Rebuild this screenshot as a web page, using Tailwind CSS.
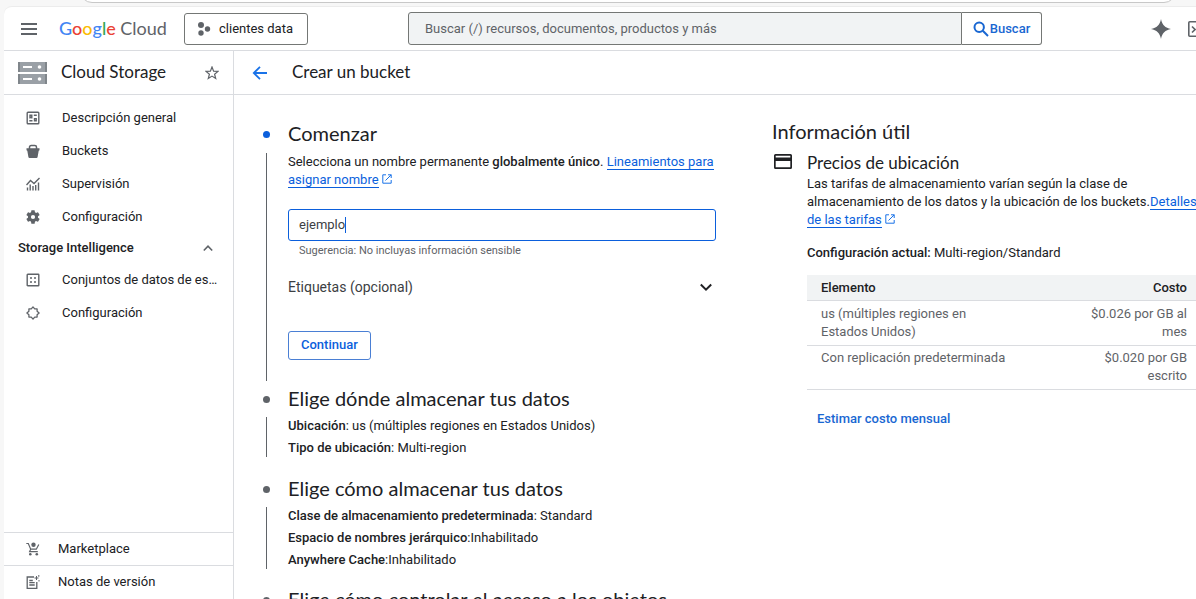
<!DOCTYPE html>
<html lang="es">
  <head>
    <meta charset="UTF-8" />
    <meta name="viewport" content="width=device-width, initial-scale=1.0" />
    <title>Crear un bucket – Cloud Storage – Google Cloud</title>
    <script src="https://cdn.jsdelivr.net/npm/@tailwindcss/browser@4"></script>
  </head>
  <body
    class="h-screen overflow-hidden bg-[#f7f7f7] font-['Roboto','Liberation_Sans',sans-serif] text-[13px] leading-[18px] text-[#202124] flex flex-col"
  >
    <!-- Lower edge of the address bar -->
    <div class="h-[6px] shrink-0 pl-[80px] pr-[20px] overflow-hidden">
      <div class="-mt-[21px] h-6 rounded-b-xl border border-[#c8c8c8] bg-white"></div>
    </div>

    <div
      class="ml-1 flex-1 min-h-0 flex flex-col bg-white rounded-tl-lg border-t border-[#ececec] overflow-hidden"
    >
      <!-- Top bar -->
      <header class="h-11 shrink-0 flex items-center border-b border-[#dadce0]">
        <button class="ml-4 w-[18px]" aria-label="Menú de navegación">
          <svg class="w-[18px] h-[18px]" viewBox="0 0 18 18" fill="#5f6368">
            <path d="M1 3h16v2H1zM1 8h16v2H1zM1 13h16v2H1z" />
          </svg>
        </button>
        <a
          href="#"
          class="ml-[21px] w-[105px] whitespace-nowrap font-['Lato',sans-serif] text-[18px] leading-[22px] pb-[2px] text-[#5f6368]"
          ><span class="font-medium"
            ><span class="text-[#4285f4]">G</span
            ><span class="text-[#ea4335]">o</span
            ><span class="text-[#fbbc04]">o</span
            ><span class="text-[#4285f4]">g</span
            ><span class="text-[#34a853]">l</span
            ><span class="text-[#ea4335]">e</span></span
          >
          Cloud</a
        >
        <button
          class="ml-5 h-8 w-[124px] box-border border border-[#747775] rounded-[3px] flex items-center pl-3 gap-2 whitespace-nowrap"
        >
          <svg class="w-[14px] h-[14px]" viewBox="0 0 14 14" fill="#5f6368">
            <circle cx="4" cy="3" r="3" />
            <circle cx="4" cy="11" r="2.7" />
            <circle cx="10.5" cy="7" r="2.7" />
          </svg>
          clientes data
        </button>
        <form class="ml-[100px] w-[634px] h-[33px] flex shrink-0" role="search">
          <input
            type="text"
            aria-label="Buscar"
            placeholder="Buscar (/) recursos, documentos, productos y más"
            class="flex-1 min-w-0 px-4 bg-[#f1f3f4] border border-[#747775] rounded-l-[3px] placeholder:text-[#5f6368]"
          />
          <button
            type="button"
            class="w-20 border border-l-0 border-[#747775] rounded-r-[3px] flex items-center justify-center gap-px text-[#1967d2] font-medium"
          >
            <svg class="w-4 h-4" viewBox="0 0 16 16" fill="none" stroke="#1967d2" stroke-width="2">
              <circle cx="6.2" cy="6.2" r="4.7" />
              <path d="M9.8 9.8l5.2 5.2" />
            </svg>
            Buscar
          </button>
        </form>
        <button class="ml-auto w-5" aria-label="Gemini">
          <svg class="w-5 h-5" viewBox="0 0 20 20" fill="#5f6368">
            <path d="M10 0c.9 5.600 4.400 9.100 10 10-5.600.9-9.100 4.400-10 10-.9-5.600-4.400-9.100-10-10 5.600-.9 9.100-4.400 10-10z" />
          </svg>
        </button>
        <button class="ml-[17px] w-2 h-[18px] overflow-hidden" aria-label="Cloud Shell">
          <svg class="w-[18px] h-[18px] max-w-none" viewBox="0 0 18 18" fill="none" stroke="#5f6368" stroke-width="1.6">
            <rect x=".8" y="1.8" width="16" height="14.500" rx="1" />
            <path d="M4 6.500l3 3-3 3" />
          </svg>
        </button>
      </header>

      <div class="flex-1 min-h-0 flex">
        <!-- Sidebar -->
        <aside class="w-[230px] shrink-0 border-r border-[#dadce0] flex flex-col">
          <div class="h-11 shrink-0 flex items-center pl-[14px] pr-[14px] border-b border-[#dadce0]">
            <svg class="w-[29px] h-[22px]" viewBox="0 0 29 22">
              <path fill="#9aa0a6" d="M0 0h29v10H0zM0 12h29v10H0z" />
              <path fill="#80868b" d="M0 0h2v10H0zM27 0h2v10h-2zM0 12h2v10H0zM27 12h2v10h-2z" />
              <path fill="#fff" d="M5 4h9v2H5zM5 16h9v2H5z" />
              <circle cx="21.500" cy="5" r="1.800" fill="#fff" />
              <circle cx="21.500" cy="17" r="1.800" fill="#fff" />
            </svg>
            <h2 class="ml-[14px] flex-1 text-[17px] leading-[22px] pb-[2px] font-['Lato',sans-serif]">Cloud Storage</h2>
            <button aria-label="Fijar">
              <svg class="w-[14px] h-[14px]" viewBox="0 0 14 14" fill="none" stroke="#5f6368" stroke-width="1.200">
                <path d="M7 1l1.600 4.100 4.400.3-3.400 2.800 1.100 4.300L7 10.100l-3.700 2.400 1.100-4.300L1 5.400l4.400-.3z" />
              </svg>
            </button>
          </div>

          <nav class="pt-[7px] flex-1">
            <ul class="flex flex-col gap-px">
              <li>
                <a href="#" class="h-8 flex items-center gap-[22px] pl-[22px]">
                  <svg class="w-[14px] h-[14px]" viewBox="0 0 14 14" fill="none" stroke="#5f6368" stroke-width="1.400">
                    <rect x="1.200" y="1.200" width="11.600" height="11.600" rx=".8" />
                    <path d="M3.300 4.200h3.200M3.300 6.200h3.200M3.300 9.800h3.200M4 3.500v4M5.800 3.500v4M7.800 4.200h3M7.800 7.600h3M7.800 9.800h3M8.500 7v3.500M10.200 7v3.500" />
                  </svg>
                  Descripción general
                </a>
              </li>
              <li>
                <a href="#" class="h-8 flex items-center gap-[22px] pl-[22px]">
                  <svg class="w-[14px] h-[14px]" viewBox="0 0 14 14">
                    <path fill="none" stroke="#5f6368" stroke-width="1.500" d="M3.500 5V3.200q0-1.700 1.700-1.700h3.600q1.700 0 1.700 1.700V5" />
                    <path fill="#5f6368" d="M.5 4.300h13v2l-.8.500-1.100 6.200q-.2.900-1.100.9h-7q-.9 0-1.100-.9L1.300 6.800l-.8-.5z" />
                  </svg>
                  Buckets
                </a>
              </li>
              <li>
                <a href="#" class="h-8 flex items-center gap-[22px] pl-[22px]">
                  <svg class="w-[14px] h-[14px]" viewBox="0 0 14 14" fill="none" stroke="#5f6368" stroke-width="1.400">
                    <path d="M.5 8l4-4.500L8 6.500l5.500-5.500" />
                    <path d="M1.500 13.500v-3M4.200 13.500V7.500M7 13.500V9M9.700 13.500V8M12.500 13.500V5.500" />
                  </svg>
                  Supervisión
                </a>
              </li>
              <li>
                <a href="#" class="h-8 flex items-center gap-[22px] pl-[22px]">
                  <svg class="w-[14px] h-[14px]" viewBox="2 2 20 20" fill="#5f6368">
                    <path d="M19.140 12.940c.04-.3.060-.61.060-.94s-.02-.64-.07-.94l2.030-1.580a.49.49 0 0 0 .12-.61l-1.920-3.320a.49.49 0 0 0-.59-.22l-2.390.96a7 7 0 0 0-1.620-.94l-.36-2.540a.48.48 0 0 0-.48-.41h-3.840a.48.48 0 0 0-.47.41l-.36 2.540c-.59.24-1.130.57-1.620.94l-2.390-.96a.48.48 0 0 0-.59.22L2.740 8.870a.48.48 0 0 0 .12.610l2.030 1.580c-.05.3-.09.63-.09.940s.02.640.07.940l-2.030 1.580a.49.49 0 0 0-.12.610l1.920 3.320c.12.220.37.290.59.220l2.390-.96c.5.380 1.030.7 1.620.94l.36 2.540c.05.240.24.410.48.410h3.840c.24 0 .44-.17.470-.41l.36-2.540a7 7 0 0 0 1.620-.94l2.390.96c.22.080.47 0 .59-.22l1.920-3.320a.48.48 0 0 0-.12-.61zM12 15a3 3 0 1 1 0-6 3 3 0 0 1 0 6z" />
                  </svg>
                  Configuración
                </a>
              </li>
            </ul>

            <button class="w-full h-[30px] flex items-center justify-between pl-[14px] pr-5 font-medium">
              Storage Intelligence
              <svg class="w-[10px] h-[10px]" viewBox="0 0 10 10" fill="none" stroke="#5f6368" stroke-width="1.600">
                <path d="M.8 7.500L5 3.200l4.200 4.300" />
              </svg>
            </button>

            <ul class="pt-px flex flex-col gap-px">
              <li>
                <a href="#" class="h-8 flex items-center gap-[22px] pl-[22px] pr-3">
                  <svg class="w-[14px] h-[14px] shrink-0" viewBox="0 0 14 14">
                    <rect x="1.200" y="1.200" width="11.600" height="11.600" rx=".6" fill="none" stroke="#5f6368" stroke-width="1.400" />
                    <path fill="#5f6368" d="M4 4.200h2v1.600H4zM8 4.200h2v1.600H8zM4 8.200h2v1.600H4zM8 8.200h2v1.600H8z" />
                  </svg>
                  <span class="truncate">Conjuntos de datos de estadísticas</span>
                </a>
              </li>
              <li>
                <a href="#" class="h-8 flex items-center gap-[22px] pl-[22px]">
                  <svg class="w-[14px] h-[14px]" viewBox="0 0 14 14" fill="none" stroke="#5f6368" stroke-width="1.300" stroke-linejoin="round">
                    <path d="M7 .9l1.700 2h2.400v2.400L13.100 7l-2 1.700v2.400H8.700l-1.700 2-1.700-2H2.900V8.700L.9 7l2-1.700V2.900h2.400z" />
                  </svg>
                  Configuración
                </a>
              </li>
            </ul>
          </nav>

          <a href="#" class="h-[33px] shrink-0 flex items-center gap-[18px] pl-[22px] border-t border-[#dadce0]">
            <svg class="w-[14px] h-[14px]" viewBox="0 0 14 14">
              <path fill="none" stroke="#5f6368" stroke-width="1.200" d="M.3 1.500h2l2.400 5.700h5.600l2.500-4.700M4.700 7.200L3.600 9.600h8.200" />
              <circle cx="7.500" cy="2.800" r="2.200" fill="#5f6368" />
              <circle cx="4.300" cy="12.300" r="1.300" fill="#5f6368" />
              <circle cx="10.800" cy="12.300" r="1.300" fill="#5f6368" />
            </svg>
            Marketplace
          </a>
          <a href="#" class="h-[34px] shrink-0 flex items-center gap-[18px] pl-[22px] pb-px border-t border-[#dadce0]">
            <svg class="w-[14px] h-[14px]" viewBox="0 0 14 14" fill="none" stroke="#5f6368" stroke-width="1.300">
              <path d="M8 2H1.200v11.300h9.600V7" />
              <path d="M3.300 5.500h3.500M3.300 7.700h5.400M3.300 10h5.400" />
              <path stroke-width="1" d="M10.500 1v4M8.500 3h4M12.800 0v1.800M13 5v1.500" />
            </svg>
            Notas de versión
          </a>
        </aside>

        <!-- Main area -->
        <div class="flex-1 min-w-0 flex flex-col">
          <div class="h-11 shrink-0 flex items-center pl-[18px] border-b border-[#dadce0]">
            <button aria-label="Volver">
              <svg class="w-4 h-4" viewBox="0 0 16 16" fill="none" stroke="#1a73e8" stroke-width="1.800">
                <path d="M15 8H2M8 1.800L1.800 8 8 14.200" />
              </svg>
            </button>
            <h1 class="ml-6 text-[17px] leading-[22px] pb-[2px] font-['Lato',sans-serif]">Crear un bucket</h1>
          </div>

          <main class="flex-1 min-h-0 overflow-hidden flex">
            <ol class="w-[454px] shrink-0 ml-7 pt-[27px]">
              <li class="flex mb-[6px]">
                <div class="w-2 mr-[18px] flex flex-col items-center">
                  <div class="h-6 flex items-center"><div class="w-[7px] h-[7px] rounded-full bg-[#0b5fdc]"></div></div>
                  <div class="mt-[7px] w-px flex-1 bg-[#5f6368]"></div>
                </div>
                <div class="flex-1 min-w-0">
                  <h2 class="text-[20px] leading-[22px] font-['Lato',sans-serif]">Comenzar</h2>
                  <p class="mt-[9px]">
                    Selecciona un nombre permanente <b class="font-medium">globalmente único</b>.
                    <a href="#" class="text-[#0b5fdc] border-b border-[#0b5fdc]">Lineamientos para asignar nombre</a>
                    <svg class="inline w-[10px] h-[10px] -mt-1" viewBox="0 0 10 10" fill="none" stroke="#1a73e8">
                      <path d="M4 .8H.8v8.400h8.400V6M6 .8h3.200V4M9.200.8L3.500 6.500" />
                    </svg>
                  </p>
                  <div class="relative mt-5">
                    <input
                      type="text"
                      id="bucket-name"
                      aria-label="Nombre del bucket"
                      aria-describedby="bucket-hint"
                      value="ejemplo"
                      class="w-full h-8 px-[10px] pb-[2px] border border-[#0b5fdc] rounded-[3px] text-[#3c4043]"
                    />
                    <div class="absolute left-[57px] top-2 w-px h-4 bg-[#0b5fdc]"></div>
                  </div>
                  <p id="bucket-hint" class="mt-[2px] pl-[11px] text-[11px] leading-4 text-[#5f6368]">
                    Sugerencia: No incluyas información sensible
                  </p>
                  <button class="mt-4 w-full h-6 flex items-center justify-between pr-1 text-[14px] text-[#3c4043]">
                    Etiquetas (opcional)
                    <svg class="w-3 h-3" viewBox="0 0 12 12" fill="none" stroke="#202124" stroke-width="2">
                      <path d="M.8 3.500L6 8.600l5.200-5.100" />
                    </svg>
                  </button>
                  <button
                    class="mt-8 mb-[21px] block h-[29px] px-3 pb-px border border-[#4a7fd4] rounded-[3px] font-medium text-[#0b5fdc]"
                  >
                    Continuar
                  </button>
                </div>
              </li>

              <li class="flex mb-[18px]">
                <div class="w-2 mr-[18px] flex flex-col items-center">
                  <div class="h-6 flex items-center"><div class="w-[7px] h-[7px] rounded-full bg-[#5f6368]"></div></div>
                  <div class="mt-[6px] mb-[2px] w-px flex-1 bg-[#5f6368]"></div>
                </div>
                <div class="flex-1 min-w-0 leading-[22px]">
                  <h2 class="mb-[6px] text-[20px] leading-[22px] font-['Lato',sans-serif]">Elige dónde almacenar tus datos</h2>
                  <p><b class="font-medium">Ubicación</b>: us (múltiples regiones en Estados Unidos)</p>
                  <p><b class="font-medium">Tipo de ubicación</b>: Multi-region</p>
                </div>
              </li>

              <li class="flex mb-[17px]">
                <div class="w-2 mr-[18px] flex flex-col items-center">
                  <div class="h-6 flex items-center"><div class="w-[7px] h-[7px] rounded-full bg-[#5f6368]"></div></div>
                  <div class="mt-[6px] mb-[2px] w-px flex-1 bg-[#5f6368]"></div>
                </div>
                <div class="flex-1 min-w-0 leading-[22px]">
                  <h2 class="mb-[6px] text-[20px] leading-[22px] font-['Lato',sans-serif]">Elige cómo almacenar tus datos</h2>
                  <p><b class="font-medium">Clase de almacenamiento predeterminada</b>: Standard</p>
                  <p><b class="font-medium">Espacio de nombres jerárquico</b>:Inhabilitado</p>
                  <p><b class="font-medium">Anywhere Cache</b>:Inhabilitado</p>
                </div>
              </li>

              <li class="flex">
                <div class="w-2 mr-[18px] flex flex-col items-center">
                  <div class="h-6 flex items-center"><div class="w-[7px] h-[7px] rounded-full bg-[#5f6368]"></div></div>
                </div>
                <h2 class="text-[20px] leading-[22px] font-['Lato',sans-serif]">Elige cómo controlar el acceso a los objetos</h2>
              </li>
            </ol>

            <!-- Help panel -->
            <section class="ml-14 flex-1 min-w-0 pt-[25px]">
              <h2 class="text-[20px] leading-[22px] font-['Lato',sans-serif]">Información útil</h2>
              <div class="mt-[11px] flex">
                <svg class="mt-px ml-[2px] mr-[15px] w-[18px] h-[15px] shrink-0" viewBox="0 0 18 15" fill="#202124">
                  <path fill-rule="evenodd" d="M1.500 0h15Q18 0 18 1.500v12q0 1.500-1.500 1.500h-15Q0 15 0 13.500v-12Q0 0 1.500 0zM1.700 1.700v1.800h14.600V1.700zM1.700 7v6.300h14.600V7z" />
                </svg>
                <div class="flex-1 min-w-0">
                  <h3 class="text-[17px] leading-5 mb-[2px] font-['Lato',sans-serif]">Precios de ubicación</h3>
                  <p class="-mr-2">
                    Las tarifas de almacenamiento varían según la clase de<br />
                    almacenamiento de los datos y la ubicación de los buckets.<a
                      href="#"
                      class="text-[#0b5fdc] border-b border-[#0b5fdc]"
                      >Detalles de las tarifas</a
                    >
                    <svg class="inline w-[10px] h-[10px] -mt-1" viewBox="0 0 10 10" fill="none" stroke="#1a73e8">
                      <path d="M4 .8H.8v8.400h8.400V6M6 .8h3.200V4M9.200.8L3.500 6.500" />
                    </svg>
                  </p>
                  <p class="mt-[15px]"><b class="font-medium">Configuración actual:</b> Multi-region/Standard</p>
                  <table class="mt-[13px] w-full table-fixed text-[#5f6368]">
                    <thead class="bg-[#f1f3f4] text-[#202124]">
                      <tr class="border-b border-[#dadce0]">
                        <th class="pt-1 pb-[3px] pl-[14px] pr-4 text-left font-medium">Elemento</th>
                        <th class="pt-1 pb-[3px] pr-[9px] w-[124px] text-right font-medium">Costo</th>
                      </tr>
                    </thead>
                    <tbody>
                      <tr class="border-b border-[#dadce0] align-top">
                        <td class="py-1 pl-[14px] pr-16">us (múltiples regiones en Estados Unidos)</td>
                        <td class="py-1 pr-[9px] text-right">$0.026 por GB al mes</td>
                      </tr>
                      <tr class="border-b border-[#dadce0] align-top">
                        <td class="pt-[3px] pb-1 pl-[14px] pr-4">Con replicación predeterminada</td>
                        <td class="pt-[3px] pb-1 pr-[9px] text-right">$0.020 por GB escrito</td>
                      </tr>
                    </tbody>
                  </table>
                  <a href="#" class="mt-5 ml-[10px] inline-block font-medium text-[#1967d2]">Estimar costo mensual</a>
                </div>
              </div>
            </section>
          </main>
        </div>
      </div>
    </div>
  </body>
</html>
